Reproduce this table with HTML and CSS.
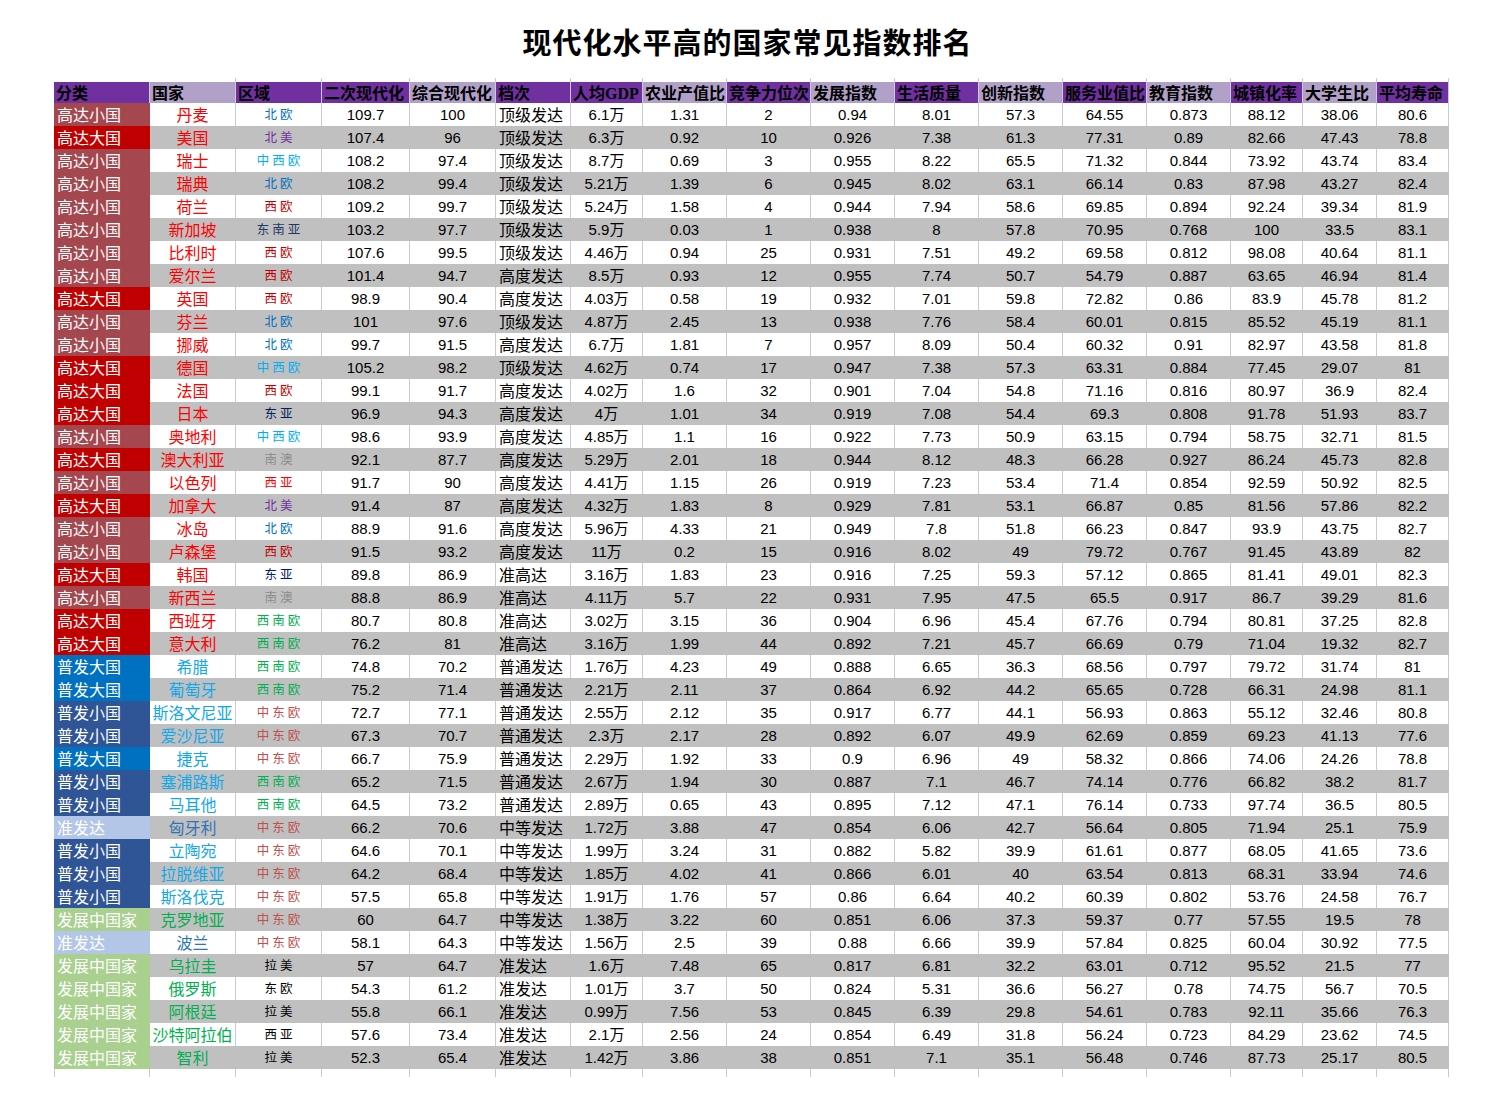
FILE: index.html
```html
<!DOCTYPE html>
<html lang="zh-CN">
<head>
<meta charset="utf-8">
<title>现代化水平高的国家常见指数排名</title>
<link rel="stylesheet" href="styles.css">
</head>
<body>
<div class="page">
<h1 class="title">现代化水平高的国家常见指数排名</h1>
<div class="sheet">
<div class="row sp-top"><span></span><span></span><span></span><span></span><span></span><span></span><span></span><span></span><span></span><span></span><span></span><span></span><span></span><span></span><span></span><span></span><span></span></div>
<div class="row head"><span class="p">分类</span><span class="l">国家</span><span class="p">区域</span><span class="p">二次现代化</span><span class="l">综合现代化</span><span class="p">档次</span><span class="p">人均GDP</span><span class="l">农业产值比</span><span class="p">竞争力位次</span><span class="l">发展指数</span><span class="p">生活质量</span><span class="l">创新指数</span><span class="p">服务业值比</span><span class="l">教育指数</span><span class="p">城镇化率</span><span class="l">大学生比</span><span class="p">平均寿命</span></div>
<div class="row"><span class="c k1">高达小国</span><span class="n nr">丹麦</span><span class="z zA">北欧</span><span class="d">109.7</span><span class="d">100</span><span class="t">顶级发达</span><span class="d">6.1万</span><span class="d">1.31</span><span class="d">2</span><span class="d">0.94</span><span class="d">8.01</span><span class="d">57.3</span><span class="d">64.55</span><span class="d">0.873</span><span class="d">88.12</span><span class="d">38.06</span><span class="d">80.6</span></div>
<div class="row g"><span class="c k2">高达大国</span><span class="n nr">美国</span><span class="z zB">北美</span><span class="d">107.4</span><span class="d">96</span><span class="t">顶级发达</span><span class="d">6.3万</span><span class="d">0.92</span><span class="d">10</span><span class="d">0.926</span><span class="d">7.38</span><span class="d">61.3</span><span class="d">77.31</span><span class="d">0.89</span><span class="d">82.66</span><span class="d">47.43</span><span class="d">78.8</span></div>
<div class="row"><span class="c k1">高达小国</span><span class="n nr">瑞士</span><span class="z zC">中西欧</span><span class="d">108.2</span><span class="d">97.4</span><span class="t">顶级发达</span><span class="d">8.7万</span><span class="d">0.69</span><span class="d">3</span><span class="d">0.955</span><span class="d">8.22</span><span class="d">65.5</span><span class="d">71.32</span><span class="d">0.844</span><span class="d">73.92</span><span class="d">43.74</span><span class="d">83.4</span></div>
<div class="row g"><span class="c k1">高达小国</span><span class="n nr">瑞典</span><span class="z zA">北欧</span><span class="d">108.2</span><span class="d">99.4</span><span class="t">顶级发达</span><span class="d">5.21万</span><span class="d">1.39</span><span class="d">6</span><span class="d">0.945</span><span class="d">8.02</span><span class="d">63.1</span><span class="d">66.14</span><span class="d">0.83</span><span class="d">87.98</span><span class="d">43.27</span><span class="d">82.4</span></div>
<div class="row"><span class="c k1">高达小国</span><span class="n nr">荷兰</span><span class="z zD">西欧</span><span class="d">109.2</span><span class="d">99.7</span><span class="t">顶级发达</span><span class="d">5.24万</span><span class="d">1.58</span><span class="d">4</span><span class="d">0.944</span><span class="d">7.94</span><span class="d">58.6</span><span class="d">69.85</span><span class="d">0.894</span><span class="d">92.24</span><span class="d">39.34</span><span class="d">81.9</span></div>
<div class="row g"><span class="c k1">高达小国</span><span class="n nr">新加坡</span><span class="z zE">东南亚</span><span class="d">103.2</span><span class="d">97.7</span><span class="t">顶级发达</span><span class="d">5.9万</span><span class="d">0.03</span><span class="d">1</span><span class="d">0.938</span><span class="d">8</span><span class="d">57.8</span><span class="d">70.95</span><span class="d">0.768</span><span class="d">100</span><span class="d">33.5</span><span class="d">83.1</span></div>
<div class="row"><span class="c k1">高达小国</span><span class="n nr">比利时</span><span class="z zD">西欧</span><span class="d">107.6</span><span class="d">99.5</span><span class="t">顶级发达</span><span class="d">4.46万</span><span class="d">0.94</span><span class="d">25</span><span class="d">0.931</span><span class="d">7.51</span><span class="d">49.2</span><span class="d">69.58</span><span class="d">0.812</span><span class="d">98.08</span><span class="d">40.64</span><span class="d">81.1</span></div>
<div class="row g"><span class="c k1">高达小国</span><span class="n nr">爱尔兰</span><span class="z zD">西欧</span><span class="d">101.4</span><span class="d">94.7</span><span class="t">高度发达</span><span class="d">8.5万</span><span class="d">0.93</span><span class="d">12</span><span class="d">0.955</span><span class="d">7.74</span><span class="d">50.7</span><span class="d">54.79</span><span class="d">0.887</span><span class="d">63.65</span><span class="d">46.94</span><span class="d">81.4</span></div>
<div class="row"><span class="c k2">高达大国</span><span class="n nr">英国</span><span class="z zD">西欧</span><span class="d">98.9</span><span class="d">90.4</span><span class="t">高度发达</span><span class="d">4.03万</span><span class="d">0.58</span><span class="d">19</span><span class="d">0.932</span><span class="d">7.01</span><span class="d">59.8</span><span class="d">72.82</span><span class="d">0.86</span><span class="d">83.9</span><span class="d">45.78</span><span class="d">81.2</span></div>
<div class="row g"><span class="c k1">高达小国</span><span class="n nr">芬兰</span><span class="z zA">北欧</span><span class="d">101</span><span class="d">97.6</span><span class="t">顶级发达</span><span class="d">4.87万</span><span class="d">2.45</span><span class="d">13</span><span class="d">0.938</span><span class="d">7.76</span><span class="d">58.4</span><span class="d">60.01</span><span class="d">0.815</span><span class="d">85.52</span><span class="d">45.19</span><span class="d">81.1</span></div>
<div class="row"><span class="c k1">高达小国</span><span class="n nr">挪威</span><span class="z zA">北欧</span><span class="d">99.7</span><span class="d">91.5</span><span class="t">高度发达</span><span class="d">6.7万</span><span class="d">1.81</span><span class="d">7</span><span class="d">0.957</span><span class="d">8.09</span><span class="d">50.4</span><span class="d">60.32</span><span class="d">0.91</span><span class="d">82.97</span><span class="d">43.58</span><span class="d">81.8</span></div>
<div class="row g"><span class="c k2">高达大国</span><span class="n nr">德国</span><span class="z zC">中西欧</span><span class="d">105.2</span><span class="d">98.2</span><span class="t">顶级发达</span><span class="d">4.62万</span><span class="d">0.74</span><span class="d">17</span><span class="d">0.947</span><span class="d">7.38</span><span class="d">57.3</span><span class="d">63.31</span><span class="d">0.884</span><span class="d">77.45</span><span class="d">29.07</span><span class="d">81</span></div>
<div class="row"><span class="c k2">高达大国</span><span class="n nr">法国</span><span class="z zD">西欧</span><span class="d">99.1</span><span class="d">91.7</span><span class="t">高度发达</span><span class="d">4.02万</span><span class="d">1.6</span><span class="d">32</span><span class="d">0.901</span><span class="d">7.04</span><span class="d">54.8</span><span class="d">71.16</span><span class="d">0.816</span><span class="d">80.97</span><span class="d">36.9</span><span class="d">82.4</span></div>
<div class="row g"><span class="c k2">高达大国</span><span class="n nr">日本</span><span class="z zF">东亚</span><span class="d">96.9</span><span class="d">94.3</span><span class="t">高度发达</span><span class="d">4万</span><span class="d">1.01</span><span class="d">34</span><span class="d">0.919</span><span class="d">7.08</span><span class="d">54.4</span><span class="d">69.3</span><span class="d">0.808</span><span class="d">91.78</span><span class="d">51.93</span><span class="d">83.7</span></div>
<div class="row"><span class="c k1">高达小国</span><span class="n nr">奥地利</span><span class="z zC">中西欧</span><span class="d">98.6</span><span class="d">93.9</span><span class="t">高度发达</span><span class="d">4.85万</span><span class="d">1.1</span><span class="d">16</span><span class="d">0.922</span><span class="d">7.73</span><span class="d">50.9</span><span class="d">63.15</span><span class="d">0.794</span><span class="d">58.75</span><span class="d">32.71</span><span class="d">81.5</span></div>
<div class="row g"><span class="c k2">高达大国</span><span class="n nr">澳大利亚</span><span class="z zG">南澳</span><span class="d">92.1</span><span class="d">87.7</span><span class="t">高度发达</span><span class="d">5.29万</span><span class="d">2.01</span><span class="d">18</span><span class="d">0.944</span><span class="d">8.12</span><span class="d">48.3</span><span class="d">66.28</span><span class="d">0.927</span><span class="d">86.24</span><span class="d">45.73</span><span class="d">82.8</span></div>
<div class="row"><span class="c k1">高达小国</span><span class="n nr">以色列</span><span class="z zH">西亚</span><span class="d">91.7</span><span class="d">90</span><span class="t">高度发达</span><span class="d">4.41万</span><span class="d">1.15</span><span class="d">26</span><span class="d">0.919</span><span class="d">7.23</span><span class="d">53.4</span><span class="d">71.4</span><span class="d">0.854</span><span class="d">92.59</span><span class="d">50.92</span><span class="d">82.5</span></div>
<div class="row g"><span class="c k2">高达大国</span><span class="n nr">加拿大</span><span class="z zB">北美</span><span class="d">91.4</span><span class="d">87</span><span class="t">高度发达</span><span class="d">4.32万</span><span class="d">1.83</span><span class="d">8</span><span class="d">0.929</span><span class="d">7.81</span><span class="d">53.1</span><span class="d">66.87</span><span class="d">0.85</span><span class="d">81.56</span><span class="d">57.86</span><span class="d">82.2</span></div>
<div class="row"><span class="c k1">高达小国</span><span class="n nr">冰岛</span><span class="z zA">北欧</span><span class="d">88.9</span><span class="d">91.6</span><span class="t">高度发达</span><span class="d">5.96万</span><span class="d">4.33</span><span class="d">21</span><span class="d">0.949</span><span class="d">7.8</span><span class="d">51.8</span><span class="d">66.23</span><span class="d">0.847</span><span class="d">93.9</span><span class="d">43.75</span><span class="d">82.7</span></div>
<div class="row g"><span class="c k1">高达小国</span><span class="n nr">卢森堡</span><span class="z zD">西欧</span><span class="d">91.5</span><span class="d">93.2</span><span class="t">高度发达</span><span class="d">11万</span><span class="d">0.2</span><span class="d">15</span><span class="d">0.916</span><span class="d">8.02</span><span class="d">49</span><span class="d">79.72</span><span class="d">0.767</span><span class="d">91.45</span><span class="d">43.89</span><span class="d">82</span></div>
<div class="row"><span class="c k2">高达大国</span><span class="n nr">韩国</span><span class="z zF">东亚</span><span class="d">89.8</span><span class="d">86.9</span><span class="t">准高达</span><span class="d">3.16万</span><span class="d">1.83</span><span class="d">23</span><span class="d">0.916</span><span class="d">7.25</span><span class="d">59.3</span><span class="d">57.12</span><span class="d">0.865</span><span class="d">81.41</span><span class="d">49.01</span><span class="d">82.3</span></div>
<div class="row g"><span class="c k1">高达小国</span><span class="n nr">新西兰</span><span class="z zG">南澳</span><span class="d">88.8</span><span class="d">86.9</span><span class="t">准高达</span><span class="d">4.11万</span><span class="d">5.7</span><span class="d">22</span><span class="d">0.931</span><span class="d">7.95</span><span class="d">47.5</span><span class="d">65.5</span><span class="d">0.917</span><span class="d">86.7</span><span class="d">39.29</span><span class="d">81.6</span></div>
<div class="row"><span class="c k2">高达大国</span><span class="n nr">西班牙</span><span class="z zI">西南欧</span><span class="d">80.7</span><span class="d">80.8</span><span class="t">准高达</span><span class="d">3.02万</span><span class="d">3.15</span><span class="d">36</span><span class="d">0.904</span><span class="d">6.96</span><span class="d">45.4</span><span class="d">67.76</span><span class="d">0.794</span><span class="d">80.81</span><span class="d">37.25</span><span class="d">82.8</span></div>
<div class="row g"><span class="c k2">高达大国</span><span class="n nr">意大利</span><span class="z zI">西南欧</span><span class="d">76.2</span><span class="d">81</span><span class="t">准高达</span><span class="d">3.16万</span><span class="d">1.99</span><span class="d">44</span><span class="d">0.892</span><span class="d">7.21</span><span class="d">45.7</span><span class="d">66.69</span><span class="d">0.79</span><span class="d">71.04</span><span class="d">19.32</span><span class="d">82.7</span></div>
<div class="row"><span class="c k3">普发大国</span><span class="n nb">希腊</span><span class="z zI">西南欧</span><span class="d">74.8</span><span class="d">70.2</span><span class="t">普通发达</span><span class="d">1.76万</span><span class="d">4.23</span><span class="d">49</span><span class="d">0.888</span><span class="d">6.65</span><span class="d">36.3</span><span class="d">68.56</span><span class="d">0.797</span><span class="d">79.72</span><span class="d">31.74</span><span class="d">81</span></div>
<div class="row g"><span class="c k3">普发大国</span><span class="n nb">葡萄牙</span><span class="z zI">西南欧</span><span class="d">75.2</span><span class="d">71.4</span><span class="t">普通发达</span><span class="d">2.21万</span><span class="d">2.11</span><span class="d">37</span><span class="d">0.864</span><span class="d">6.92</span><span class="d">44.2</span><span class="d">65.65</span><span class="d">0.728</span><span class="d">66.31</span><span class="d">24.98</span><span class="d">81.1</span></div>
<div class="row"><span class="c k4">普发小国</span><span class="n nb">斯洛文尼亚</span><span class="z zJ">中东欧</span><span class="d">72.7</span><span class="d">77.1</span><span class="t">普通发达</span><span class="d">2.55万</span><span class="d">2.12</span><span class="d">35</span><span class="d">0.917</span><span class="d">6.77</span><span class="d">44.1</span><span class="d">56.93</span><span class="d">0.863</span><span class="d">55.12</span><span class="d">32.46</span><span class="d">80.8</span></div>
<div class="row g"><span class="c k4">普发小国</span><span class="n nb">爱沙尼亚</span><span class="z zJ">中东欧</span><span class="d">67.3</span><span class="d">70.7</span><span class="t">普通发达</span><span class="d">2.3万</span><span class="d">2.17</span><span class="d">28</span><span class="d">0.892</span><span class="d">6.07</span><span class="d">49.9</span><span class="d">62.69</span><span class="d">0.859</span><span class="d">69.23</span><span class="d">41.13</span><span class="d">77.6</span></div>
<div class="row"><span class="c k3">普发大国</span><span class="n nb">捷克</span><span class="z zJ">中东欧</span><span class="d">66.7</span><span class="d">75.9</span><span class="t">普通发达</span><span class="d">2.29万</span><span class="d">1.92</span><span class="d">33</span><span class="d">0.9</span><span class="d">6.96</span><span class="d">49</span><span class="d">58.32</span><span class="d">0.866</span><span class="d">74.06</span><span class="d">24.26</span><span class="d">78.8</span></div>
<div class="row g"><span class="c k4">普发小国</span><span class="n nb">塞浦路斯</span><span class="z zI">西南欧</span><span class="d">65.2</span><span class="d">71.5</span><span class="t">普通发达</span><span class="d">2.67万</span><span class="d">1.94</span><span class="d">30</span><span class="d">0.887</span><span class="d">7.1</span><span class="d">46.7</span><span class="d">74.14</span><span class="d">0.776</span><span class="d">66.82</span><span class="d">38.2</span><span class="d">81.7</span></div>
<div class="row"><span class="c k4">普发小国</span><span class="n nb">马耳他</span><span class="z zI">西南欧</span><span class="d">64.5</span><span class="d">73.2</span><span class="t">普通发达</span><span class="d">2.89万</span><span class="d">0.65</span><span class="d">43</span><span class="d">0.895</span><span class="d">7.12</span><span class="d">47.1</span><span class="d">76.14</span><span class="d">0.733</span><span class="d">97.74</span><span class="d">36.5</span><span class="d">80.5</span></div>
<div class="row g"><span class="c k5">准发达</span><span class="n ns">匈牙利</span><span class="z zJ">中东欧</span><span class="d">66.2</span><span class="d">70.6</span><span class="t">中等发达</span><span class="d">1.72万</span><span class="d">3.88</span><span class="d">47</span><span class="d">0.854</span><span class="d">6.06</span><span class="d">42.7</span><span class="d">56.64</span><span class="d">0.805</span><span class="d">71.94</span><span class="d">25.1</span><span class="d">75.9</span></div>
<div class="row"><span class="c k4">普发小国</span><span class="n nb">立陶宛</span><span class="z zJ">中东欧</span><span class="d">64.6</span><span class="d">70.1</span><span class="t">中等发达</span><span class="d">1.99万</span><span class="d">3.24</span><span class="d">31</span><span class="d">0.882</span><span class="d">5.82</span><span class="d">39.9</span><span class="d">61.61</span><span class="d">0.877</span><span class="d">68.05</span><span class="d">41.65</span><span class="d">73.6</span></div>
<div class="row g"><span class="c k4">普发小国</span><span class="n nb">拉脱维亚</span><span class="z zJ">中东欧</span><span class="d">64.2</span><span class="d">68.4</span><span class="t">中等发达</span><span class="d">1.85万</span><span class="d">4.02</span><span class="d">41</span><span class="d">0.866</span><span class="d">6.01</span><span class="d">40</span><span class="d">63.54</span><span class="d">0.813</span><span class="d">68.31</span><span class="d">33.94</span><span class="d">74.6</span></div>
<div class="row"><span class="c k4">普发小国</span><span class="n nb">斯洛伐克</span><span class="z zJ">中东欧</span><span class="d">57.5</span><span class="d">65.8</span><span class="t">中等发达</span><span class="d">1.91万</span><span class="d">1.76</span><span class="d">57</span><span class="d">0.86</span><span class="d">6.64</span><span class="d">40.2</span><span class="d">60.39</span><span class="d">0.802</span><span class="d">53.76</span><span class="d">24.58</span><span class="d">76.7</span></div>
<div class="row g"><span class="c k6">发展中国家</span><span class="n ng">克罗地亚</span><span class="z zJ">中东欧</span><span class="d">60</span><span class="d">64.7</span><span class="t">中等发达</span><span class="d">1.38万</span><span class="d">3.22</span><span class="d">60</span><span class="d">0.851</span><span class="d">6.06</span><span class="d">37.3</span><span class="d">59.37</span><span class="d">0.77</span><span class="d">57.55</span><span class="d">19.5</span><span class="d">78</span></div>
<div class="row"><span class="c k5">准发达</span><span class="n ns">波兰</span><span class="z zJ">中东欧</span><span class="d">58.1</span><span class="d">64.3</span><span class="t">中等发达</span><span class="d">1.56万</span><span class="d">2.5</span><span class="d">39</span><span class="d">0.88</span><span class="d">6.66</span><span class="d">39.9</span><span class="d">57.84</span><span class="d">0.825</span><span class="d">60.04</span><span class="d">30.92</span><span class="d">77.5</span></div>
<div class="row g"><span class="c k6">发展中国家</span><span class="n ng">乌拉圭</span><span class="z zK">拉美</span><span class="d">57</span><span class="d">64.7</span><span class="t">准发达</span><span class="d">1.6万</span><span class="d">7.48</span><span class="d">65</span><span class="d">0.817</span><span class="d">6.81</span><span class="d">32.2</span><span class="d">63.01</span><span class="d">0.712</span><span class="d">95.52</span><span class="d">21.5</span><span class="d">77</span></div>
<div class="row"><span class="c k6">发展中国家</span><span class="n ng">俄罗斯</span><span class="z zK">东欧</span><span class="d">54.3</span><span class="d">61.2</span><span class="t">准发达</span><span class="d">1.01万</span><span class="d">3.7</span><span class="d">50</span><span class="d">0.824</span><span class="d">5.31</span><span class="d">36.6</span><span class="d">56.27</span><span class="d">0.78</span><span class="d">74.75</span><span class="d">56.7</span><span class="d">70.5</span></div>
<div class="row g"><span class="c k6">发展中国家</span><span class="n ng">阿根廷</span><span class="z zK">拉美</span><span class="d">55.8</span><span class="d">66.1</span><span class="t">准发达</span><span class="d">0.99万</span><span class="d">7.56</span><span class="d">53</span><span class="d">0.845</span><span class="d">6.39</span><span class="d">29.8</span><span class="d">54.61</span><span class="d">0.783</span><span class="d">92.11</span><span class="d">35.66</span><span class="d">76.3</span></div>
<div class="row"><span class="c k6">发展中国家</span><span class="n ng">沙特阿拉伯</span><span class="z zK">西亚</span><span class="d">57.6</span><span class="d">73.4</span><span class="t">准发达</span><span class="d">2.1万</span><span class="d">2.56</span><span class="d">24</span><span class="d">0.854</span><span class="d">6.49</span><span class="d">31.8</span><span class="d">56.24</span><span class="d">0.723</span><span class="d">84.29</span><span class="d">23.62</span><span class="d">74.5</span></div>
<div class="row g"><span class="c k6">发展中国家</span><span class="n ng">智利</span><span class="z zK">拉美</span><span class="d">52.3</span><span class="d">65.4</span><span class="t">准发达</span><span class="d">1.42万</span><span class="d">3.86</span><span class="d">38</span><span class="d">0.851</span><span class="d">7.1</span><span class="d">35.1</span><span class="d">56.48</span><span class="d">0.746</span><span class="d">87.73</span><span class="d">25.17</span><span class="d">80.5</span></div>
<div class="row sp-bot"><span></span><span></span><span></span><span></span><span></span><span></span><span></span><span></span><span></span><span></span><span></span><span></span><span></span><span></span><span></span><span></span><span></span></div>
</div>
</div>
</body>
</html>
```
FILE: styles.css
```css
body {
  margin: 0;
  background: #ffffff;
  font-family: "Noto Sans CJK SC", sans-serif;
  color: #000;
}

.page {
  padding-top: 23px;
}

.title {
  margin: 0 0 19px 50px;
  width: 1395px;
  text-align: center;
  font-size: 29px;
  line-height: 36px;
  font-weight: 700;
  letter-spacing: 1px;
}

.sheet {
  margin-left: 54px;
  width: 1395px;
}

.row {
  display: grid;
  grid-template-columns: 96px 86px 86px 88px 86px 75px 72px 84px 84px 84px 84px 84px 84px 84px 72px 74px 72px;
  height: 23px;
  background: #ffffff;
}

.row > span {
  box-sizing: border-box;
  border-right: 1px solid #c9c9de;
  display: flex;
  align-items: center;
  justify-content: center;
  white-space: nowrap;
  line-height: 18px;
}

.sp-top {
  height: 4px;
}

.sp-top > span:first-child {
  border-right-color: transparent;
}

.sp-bot {
  height: 8px;
}

.sp-bot > span:first-child {
  border-left: 1px solid #c9c9de;
}

.head {
  height: 21px;
}

.head > span {
  justify-content: flex-start;
  padding-left: 2px;
  padding-top: 2px;
  font-family: "Liberation Serif", "Noto Sans CJK SC", serif;
  font-weight: 700;
  font-size: 16px;
  color: #000;
}

.p {
  background: #7030a0;
}

.l {
  background: #b1a0c7;
}

.g {
  background: #c0c0c0;
}

.g > span {
  border-right-color: #c0c0c0;
}

/* category */
.row > .c {
  justify-content: flex-start;
  padding-left: 3px;
  padding-bottom: 2px;
  color: #ffffff;
  font-size: 16px;
  border-right-color: transparent;
}

.k1 { background: #a4474e; }
.k2 { background: #c00000; }
.k3 { background: #0070c0; }
.k4 { background: #2f5597; }
.k5 { background: #b4c6e7; }
.k6 { background: #a9d08e; }

/* country names */
.row > .n {
  font-size: 16px;
  padding-bottom: 2px;
}

.nr { color: #ff0000; }
.nb { color: #10a8ec; }
.ns { color: #2f75b5; }
.ng { color: #00b050; }

/* region */
.row > .z {
  font-size: 12.5px;
  letter-spacing: 3px;
  padding-left: 3px;
  padding-bottom: 1px;
}

.zA { color: #0070c0; }
.zB { color: #7030a0; }
.zC { color: #00b0f0; }
.zD { color: #c00000; }
.zE { color: #1f3864; }
.zF { color: #002060; }
.zG { color: #8c8c8c; }
.zH { color: #ff0000; }
.zI { color: #00b050; }
.zJ { color: #c0504d; }
.zK { color: #000000; }

/* numbers */
.d {
  font-family: "Liberation Sans", "Noto Sans CJK SC", sans-serif;
  font-size: 15px;
}

/* grade */
.row > .t {
  justify-content: flex-start;
  padding-left: 3px;
  padding-bottom: 2px;
  font-size: 16px;
}
```
